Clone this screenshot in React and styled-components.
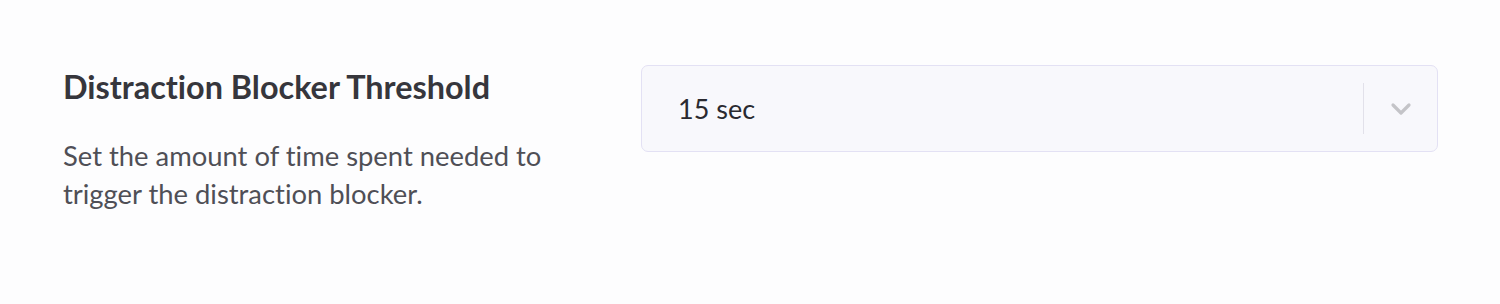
import React from 'react'
import styled, { createGlobalStyle } from 'styled-components';

const Global = createGlobalStyle`
html, body {
  margin: 0;
  padding: 0;
  background: #fdfdfe;
}
body {
  font-family: Lato, "Open Sans", sans-serif;
  font-variant-ligatures: none;
}
`;

const Row = styled.div`
display: flex;
align-items: flex-start;
justify-content: space-between;
padding: 65px 63px 0 63px;
height: 304px;
box-sizing: border-box;`;

const Info = styled.div`
display: flex;
flex-direction: column;
width: 520px;`;

const Title = styled.div`
font-size: 32.4px;
font-weight: 700;
color: #36363c;
line-height: 1;
margin-top: 6px;`;

const Description = styled.div`
font-size: 27.4px;
font-weight: 400;
color: #4f4f56;
line-height: 38px;
margin-top: 34px;`;

const Select = styled.div`
display: flex;
align-items: center;
width: 797px;
height: 87px;
box-sizing: border-box;
background: #f8f8fc;
border: 1.5px solid #e3e1f4;
border-radius: 7px;
margin-right: -1px;`;

const Value = styled.div`
flex: 1;
padding-left: 36px;
font-size: 27px;
color: #2a2a30;`;

const Divider = styled.div`
width: 1.5px;
height: 51px;
background: #e2e1ea;`;

const Chevron = styled.div`
display: flex;
align-items: center;
justify-content: center;
width: 73px;
color: #c4c4c8;`;

const ChevronIcon = () => (
  <svg width="22" height="14" viewBox="0 0 22 14">
    <path d="M3 3 L11 11 L19 3" fill="none" stroke="currentColor" strokeWidth="3.2" strokeLinecap="round" strokeLinejoin="round" />
  </svg>
);

const App = () => {
  return (
    <>
      <Global />
      <Row>
        <Info>
          <Title>Distraction Blocker Threshold</Title>
          <Description>Set the amount of time spent needed to trigger the distraction blocker.</Description>
        </Info>
        <Select>
          <Value>15 sec</Value>
          <Divider />
          <Chevron>
            <ChevronIcon />
          </Chevron>
        </Select>
      </Row>
    </>
  )
}

export default App
